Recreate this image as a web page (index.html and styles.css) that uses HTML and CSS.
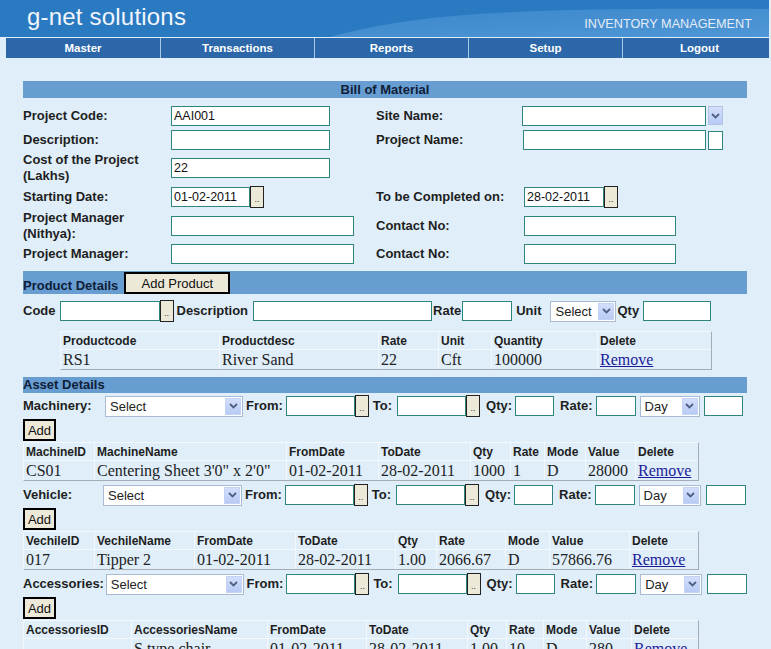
FILE: index.html
```html
<!DOCTYPE html>
<html lang="en">
<head>
    <meta charset="UTF-8">
    <title>Bill of Material - g-net solutions</title>
    <link rel="stylesheet" href="styles.css">
</head>
<body>
    <div class="header">
        <svg class="header-wave" viewBox="0 0 769 37" preserveAspectRatio="none">
            <defs>
                <linearGradient id="wave" x1="0" y1="0" x2="1" y2="1">
                    <stop offset="0" stop-color="#3b87cb"/>
                    <stop offset="1" stop-color="#4f97d6"/>
                </linearGradient>
            </defs>
            <path d="M330 37 C 420 12, 520 8, 769 9 L 769 37 Z" fill="url(#wave)"/>
        </svg>
        <div class="brand">g-net solutions</div>
        <div class="tagline">INVENTORY MANAGEMENT</div>
    </div>

    <div class="menu">
        <a href="#">Master</a>
        <a href="#">Transactions</a>
        <a href="#">Reports</a>
        <a href="#">Setup</a>
        <a href="#">Logout</a>
    </div>

    <div class="content">
        <div class="bar bar-title">Bill of Material</div>

        <div class="form-grid">
            <label class="lbl">Project Code:</label>
            <div><input class="txt w159" type="text" value="AAI001"></div>
            <label class="lbl">Site Name:</label>
            <div class="field">
                <input class="txt w184" type="text">
                <span class="drop-btn"><svg width="9" height="6" viewBox="0 0 9 6"><path d="M1 1l3.5 3.5L8 1" fill="none" stroke="#4d6185" stroke-width="1.8"/></svg></span>
            </div>

            <label class="lbl">Description:</label>
            <div><input class="txt w159" type="text"></div>
            <label class="lbl">Project Name:</label>
            <div class="field shift1">
                <input class="txt w183" type="text">
                <span class="mini-box"></span>
            </div>

            <label class="lbl">Cost of the Project<br>(Lakhs)</label>
            <div><input class="txt w159" type="text" value="22"></div>
            <div></div>
            <div></div>

            <label class="lbl">Starting Date:</label>
            <div class="field">
                <input class="txt w79" type="text" value="01-02-2011"><button class="dot-btn">..</button>
            </div>
            <label class="lbl">To be Completed on:</label>
            <div class="field shift2">
                <input class="txt w80" type="text" value="28-02-2011"><button class="dot-btn">..</button>
            </div>

            <label class="lbl">Project Manager<br>(Nithya):</label>
            <div><input class="txt w183" type="text"></div>
            <label class="lbl">Contact No:</label>
            <div class="shift2"><input class="txt w152" type="text"></div>

            <label class="lbl">Project Manager:</label>
            <div><input class="txt w183" type="text"></div>
            <label class="lbl">Contact No:</label>
            <div class="shift2"><input class="txt w152" type="text"></div>
        </div>

        <div class="bar bar-product">
            <span class="bar-text">Product Details</span>
            <button class="btn btn-product">Add Product</button>
        </div>

        <div class="line-row">
            <span class="lbl">Code</span>
            <input class="txt w100 ml4" type="text"><button class="dot-btn ml1">..</button>
            <span class="lbl ml3">Description</span>
            <input class="txt w179 ml5" type="text">
            <span class="lbl ml1">Rate</span>
            <input class="txt w50 ml1" type="text">
            <span class="lbl ml4">Unit</span>
            <div class="select w66 ml9"><span>Select</span><i class="arrow"><svg width="9" height="6" viewBox="0 0 9 6"><path d="M1 1l3.5 3.5L8 1" fill="none" stroke="#4d6185" stroke-width="1.8"/></svg></i></div>
            <span class="lbl ml1">Qty</span>
            <input class="txt w68 ml4" type="text">
        </div>

        <table class="grid grid-product">
            <colgroup><col width="159"><col width="159"><col width="60"><col width="53"><col width="106"><col width="113"></colgroup>
            <tr><th>Productcode</th><th>Productdesc</th><th>Rate</th><th>Unit</th><th>Quantity</th><th>Delete</th></tr>
            <tr><td>RS1</td><td>River Sand</td><td>22</td><td>Cft</td><td>100000</td><td><a href="#">Remove</a></td></tr>
        </table>

        <div class="bar bar-asset">Asset Details</div>

        <div class="line-row asset-row">
            <span class="lbl asset-lbl">Machinery:</span>
            <div class="select w138"><span>Select</span><i class="arrow"><svg width="9" height="6" viewBox="0 0 9 6"><path d="M1 1l3.5 3.5L8 1" fill="none" stroke="#4d6185" stroke-width="1.8"/></svg></i></div>
            <span class="lbl ml3">From:</span>
            <input class="txt w69 ml3" type="text"><button class="dot-btn ml1">..</button>
            <span class="lbl ml4">To:</span>
            <input class="txt w69 ml5" type="text"><button class="dot-btn ml1">..</button>
            <span class="lbl ml6">Qty:</span>
            <input class="txt w39 ml3" type="text">
            <span class="lbl ml6">Rate:</span>
            <input class="txt w40 ml3" type="text">
            <div class="select w60 ml4"><span>Day</span><i class="arrow"><svg width="9" height="6" viewBox="0 0 9 6"><path d="M1 1l3.5 3.5L8 1" fill="none" stroke="#4d6185" stroke-width="1.8"/></svg></i></div>
            <input class="txt w39 ml4" type="text">
        </div>
        <div class="add-row"><button class="btn btn-add">Add</button></div>
        <table class="grid grid-asset">
            <colgroup><col width="71"><col width="192"><col width="92"><col width="92"><col width="40"><col width="34"><col width="41"><col width="50"><col width="62"></colgroup>
            <tr><th>MachineID</th><th>MachineName</th><th>FromDate</th><th>ToDate</th><th>Qty</th><th>Rate</th><th>Mode</th><th>Value</th><th>Delete</th></tr>
            <tr><td>CS01</td><td>Centering Sheet 3'0" x 2'0"</td><td>01-02-2011</td><td>28-02-2011</td><td>1000</td><td>1</td><td>D</td><td>28000</td><td><a href="#">Remove</a></td></tr>
        </table>

        <div class="line-row asset-row">
            <span class="lbl asset-lbl">Vehicle:</span>
            <div class="select w139 shift-left"><span>Select</span><i class="arrow"><svg width="9" height="6" viewBox="0 0 9 6"><path d="M1 1l3.5 3.5L8 1" fill="none" stroke="#4d6185" stroke-width="1.8"/></svg></i></div>
            <span class="lbl ml3">From:</span>
            <input class="txt w69 ml3" type="text"><button class="dot-btn ml1">..</button>
            <span class="lbl ml4">To:</span>
            <input class="txt w69 ml5" type="text"><button class="dot-btn ml1">..</button>
            <span class="lbl ml6">Qty:</span>
            <input class="txt w39 ml3" type="text">
            <span class="lbl ml6">Rate:</span>
            <input class="txt w40 ml3" type="text">
            <div class="select w62 ml4"><span>Day</span><i class="arrow"><svg width="9" height="6" viewBox="0 0 9 6"><path d="M1 1l3.5 3.5L8 1" fill="none" stroke="#4d6185" stroke-width="1.8"/></svg></i></div>
            <input class="txt w40 ml5" type="text">
        </div>
        <div class="add-row"><button class="btn btn-add">Add</button></div>
        <table class="grid grid-asset">
            <colgroup><col width="71"><col width="100"><col width="101"><col width="100"><col width="41"><col width="69"><col width="44"><col width="80"><col width="68"></colgroup>
            <tr><th>VechileID</th><th>VechileName</th><th>FromDate</th><th>ToDate</th><th>Qty</th><th>Rate</th><th>Mode</th><th>Value</th><th>Delete</th></tr>
            <tr><td>017</td><td>Tipper 2</td><td>01-02-2011</td><td>28-02-2011</td><td>1.00</td><td>2066.67</td><td>D</td><td>57866.76</td><td><a href="#">Remove</a></td></tr>
        </table>

        <div class="line-row asset-row">
            <span class="lbl asset-lbl">Accessories:</span>
            <div class="select w138"><span>Select</span><i class="arrow"><svg width="9" height="6" viewBox="0 0 9 6"><path d="M1 1l3.5 3.5L8 1" fill="none" stroke="#4d6185" stroke-width="1.8"/></svg></i></div>
            <span class="lbl ml3">From:</span>
            <input class="txt w69 ml3" type="text"><button class="dot-btn ml1">..</button>
            <span class="lbl ml4">To:</span>
            <input class="txt w69 ml5" type="text"><button class="dot-btn ml1">..</button>
            <span class="lbl ml6">Qty:</span>
            <input class="txt w39 ml3" type="text">
            <span class="lbl ml6">Rate:</span>
            <input class="txt w40 ml3" type="text">
            <div class="select w62 ml4"><span>Day</span><i class="arrow"><svg width="9" height="6" viewBox="0 0 9 6"><path d="M1 1l3.5 3.5L8 1" fill="none" stroke="#4d6185" stroke-width="1.8"/></svg></i></div>
            <input class="txt w40 ml5" type="text">
        </div>
        <div class="add-row"><button class="btn btn-add">Add</button></div>
        <table class="grid grid-asset">
            <colgroup><col width="108"><col width="136"><col width="99"><col width="101"><col width="39"><col width="37"><col width="43"><col width="45"><col width="66"></colgroup>
            <tr><th>AccessoriesID</th><th>AccessoriesName</th><th>FromDate</th><th>ToDate</th><th>Qty</th><th>Rate</th><th>Mode</th><th>Value</th><th>Delete</th></tr>
            <tr><td></td><td>S type chair</td><td>01-02-2011</td><td>28-02-2011</td><td>1.00</td><td>10</td><td>D</td><td>280</td><td><a href="#">Remove</a></td></tr>
        </table>
    </div>
</body>
</html>
```

FILE: styles.css
```css
* {
    box-sizing: border-box;
}

body {
    margin: 0;
    background: #dfeef9;
    font-family: "Liberation Sans", Arial, sans-serif;
    font-size: 13px;
    color: #1e1e1e;
}

/* header */

.header {
    position: relative;
    width: 769px;
    height: 37px;
    background: #2a7ac2;
    overflow: hidden;
    display: flex;
    justify-content: space-between;
    align-items: flex-start;
    padding: 0 17px 0 27px;
}

.header-wave {
    position: absolute;
    left: 0;
    top: 0;
    width: 100%;
    height: 100%;
}

.brand {
    position: relative;
    font-size: 24px;
    line-height: 28px;
    margin-top: 3px;
    letter-spacing: 0.2px;
    color: #f2f6fb;
}

.tagline {
    position: relative;
    font-size: 12.7px;
    line-height: 15px;
    margin-top: 17px;
    color: #e4ecf5;
}

.menu {
    width: 763px;
    height: 20px;
    margin: 1px 0 0 6px;
    display: grid;
    grid-template-columns: repeat(5, 154px);
    overflow: hidden;
    background: #2c68a9;
}

.menu a {
    color: #fff;
    font-weight: bold;
    font-size: 11.5px;
    line-height: 20px;
    text-align: center;
    text-decoration: none;
    border-left: 1px solid #a9c8e6;
}

.menu a:first-child {
    border-left: none;
}

/* content */

.content {
    margin: 23px 24px 0 23px;
}

.bar {
    background: #689dd2;
    color: #0f2038;
    font-weight: bold;
}

.bar-title {
    height: 17px;
    line-height: 17px;
    text-align: center;
}

.form-grid {
    display: grid;
    grid-template-columns: 148px 205px 146px 1fr;
    grid-template-rows: 24px 24px 32px 25px 33px 23px;
    align-items: center;
    padding-top: 6px;
}

.lbl {
    font-weight: bold;
    line-height: 16px;
    white-space: nowrap;
}

.field {
    display: flex;
    align-items: center;
}

.shift1 {
    padding-left: 1px;
}

.shift2 {
    padding-left: 2px;
}

.shift-left {
    margin-left: -2px;
}

.txt {
    height: 20px;
    margin: 0;
    padding: 0 2px;
    border: 1px solid #2f857e;
    background: #fff;
    font: 12.5px "Liberation Sans", Arial, sans-serif;
    color: #111;
}

.w39 { width: 39px; }
.w40 { width: 40px; }
.w50 { width: 50px; }
.w60 { width: 60px; }
.w62 { width: 62px; }
.w66 { width: 66px; }
.w68 { width: 68px; }
.w69 { width: 69px; }
.w79 { width: 79px; }
.w80 { width: 80px; }
.w100 { width: 100px; }
.w138 { width: 138px; }
.w139 { width: 139px; }
.w152 { width: 152px; }
.w159 { width: 159px; }
.w179 { width: 179px; }
.w183 { width: 183px; }
.w184 { width: 184px; }

.ml1 { margin-left: 1px; }
.ml3 { margin-left: 3px; }
.ml4 { margin-left: 4px; }
.ml5 { margin-left: 5px; }
.ml6 { margin-left: 6px; }
.ml9 { margin-left: 9px; }

.drop-btn {
    width: 15px;
    height: 19px;
    margin-left: 2px;
    align-self: flex-start;
    display: flex;
    align-items: center;
    justify-content: center;
    background: linear-gradient(#d3defb, #b8cbf5);
    border: 1px solid #b3c3e6;
}

.mini-box {
    width: 15px;
    height: 19px;
    margin-left: 2px;
    background: #fff;
    border: 1px solid #2f857e;
}

.dot-btn {
    width: 14px;
    height: 22px;
    margin: 0;
    padding: 0 0 3px;
    border: 1px solid #222;
    background: #ece9d8;
    font: 9px "Liberation Sans", Arial, sans-serif;
    color: #333;
    display: inline-flex;
    align-items: flex-end;
    justify-content: center;
}

.btn {
    margin: 0;
    padding: 0;
    height: 22px;
    border: 2px solid #000;
    background: #ece9d8;
    font: 13px "Liberation Sans", Arial, sans-serif;
    color: #111;
}

.bar-product {
    height: 23px;
    margin-top: 6px;
    display: flex;
    align-items: flex-end;
}

.bar-text {
    line-height: 16px;
}

.btn-product {
    width: 106px;
    margin-left: 6px;
}

.line-row {
    display: flex;
    align-items: center;
    height: 22px;
    margin-top: 6px;
}

.select {
    display: inline-flex;
    align-items: center;
    justify-content: space-between;
    height: 21px;
    padding-left: 4px;
    border: 1px solid #a9bad3;
    background: #fff;
    font: 13px "Liberation Sans", Arial, sans-serif;
    color: #222;
}

.select .arrow {
    width: 16px;
    height: 17px;
    margin-right: 1px;
    display: flex;
    align-items: center;
    justify-content: center;
    background: linear-gradient(#d3defb, #b8cbf5);
    border: 1px solid #c3d3f5;
}

/* tables */

.grid {
    border-collapse: separate;
    border-spacing: 0;
    table-layout: fixed;
    border-top: 1px solid #f3f8fc;
    border-left: 1px solid #f3f8fc;
    border-right: 1px solid #a4adb6;
    border-bottom: 1px solid #a4adb6;
}

.grid th {
    height: 18px;
    padding: 0 2px;
    text-align: left;
    font: bold 12px "Liberation Sans", Arial, sans-serif;
    color: #1e1e1e;
    white-space: nowrap;
    overflow: hidden;
    border-right: 1px solid #f3f8fc;
    border-bottom: 1px solid #f3f8fc;
}

.grid td {
    height: 19px;
    padding: 0 2px;
    font: 16px "Liberation Serif", "Times New Roman", serif;
    color: #222;
    white-space: nowrap;
    overflow: hidden;
    border-right: 1px solid #f3f8fc;
}

.grid th:last-child,
.grid td:last-child {
    border-right: none;
}

.grid a {
    color: #1b1b9a;
}

.grid-product {
    width: 652px;
    margin: 9px 0 0 37px;
}

.grid-asset {
    width: 676px;
    margin-top: 1px;
}

.bar-asset {
    height: 16px;
    line-height: 16px;
    margin-top: 7px;
}

.asset-row {
    margin-top: 2px;
}

.grid-asset + .asset-row {
    margin-top: 3px;
}

.asset-lbl {
    min-width: 80px;
    margin-right: 2px;
}

.add-row {
    margin-top: 2px;
}

.btn-add {
    width: 33px;
}
```
